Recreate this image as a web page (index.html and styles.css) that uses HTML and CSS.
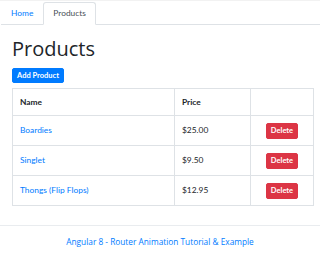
FILE: index.html
```html
<!DOCTYPE html>
<html lang="en">
<head>
    <meta charset="UTF-8">
    <meta name="viewport" content="width=device-width, initial-scale=1.0">
    <title>Products</title>
    <link rel="stylesheet" href="styles.css">
</head>
<body>
    <ul class="nav-tabs">
        <li><a href="#" class="nav-link">Home</a></li>
        <li><a href="#" class="nav-link active">Products</a></li>
    </ul>

    <div class="container">
        <h1>Products</h1>
        <button class="btn btn-primary">Add Product</button>

        <table class="table">
            <thead>
                <tr>
                    <th>Name</th>
                    <th class="col-price">Price</th>
                    <th class="col-action"></th>
                </tr>
            </thead>
            <tbody>
                <tr>
                    <td><a href="#">Boardies</a></td>
                    <td>$25.00</td>
                    <td class="col-action"><button class="btn btn-danger">Delete</button></td>
                </tr>
                <tr>
                    <td><a href="#">Singlet</a></td>
                    <td>$9.50</td>
                    <td class="col-action"><button class="btn btn-danger">Delete</button></td>
                </tr>
                <tr>
                    <td><a href="#">Thongs (Flip Flops)</a></td>
                    <td>$12.95</td>
                    <td class="col-action"><button class="btn btn-danger">Delete</button></td>
                </tr>
            </tbody>
        </table>
    </div>

    <div class="footer">
        <a href="#">Angular 8 - Router Animation Tutorial &amp; Example</a>
    </div>
</body>
</html>
```

FILE: styles.css
```css
body {
    font-family: Lato, "Open Sans", sans-serif;
    font-size: 8.4px;
    line-height: 1.5;
    color: #212529;
    margin: 0;
    border-top: 1px solid #f2f2f2;
}
a {
    color: #007bff;
    text-decoration: none;
}
.nav-tabs {
    display: flex;
    list-style: none;
    margin: 0 0 0 1px;
    padding: 1px 0 0 0;
    border-bottom: 1px solid #dee2e6;
}
.nav-link {
    display: block;
    height: 13px;
    padding: 4px 9px;
    border: 1px solid transparent;
    border-radius: 3px 3px 0 0;
    margin-bottom: -1px;
}
.nav-link.active {
    color: #495057;
    background: #fff;
    border-color: #dee2e6 #dee2e6 #fff;
}
.container {
    padding: 0 6px 0 12px;
}
h1 {
    font-family: "Open Sans", sans-serif;
    font-size: 20px;
    font-weight: 400;
    line-height: 1.2;
    margin: 12px 0 7px 0;
}
.btn {
    display: inline-block;
    font-family: Lato, sans-serif;
    font-weight: 700;
    font-size: 7.5px;
    color: #fff;
    border: 1px solid transparent;
    border-radius: 2px;
    cursor: pointer;
}
.btn-primary {
    background-color: #007bff;
    border-color: #007bff;
    height: 15px;
    padding: 0 4px;
}
.btn-danger {
    background-color: #dc3545;
    border-color: #dc3545;
    height: 16px;
    padding: 0 4px;
}
.table {
    width: 302px;
    margin-top: 5px;
    border-collapse: collapse;
    border: 1px solid #dee2e6;
}
.table th, .table td {
    border: 1px solid #dee2e6;
    padding: 6px 7px;
    text-align: left;
    vertical-align: middle;
}
.table th {
    font-weight: 700;
    height: 14px;
}
.table td {
    height: 17px;
}
.col-price {
    width: 61px;
}
.table .col-action {
    width: 48px;
    text-align: center;
}
.footer {
    margin-top: 19px;
    border-top: 1px solid #e9ecef;
    padding: 10px 0;
    text-align: center;
    font-family: "Open Sans", sans-serif;
    font-size: 8.3px;
}
```
